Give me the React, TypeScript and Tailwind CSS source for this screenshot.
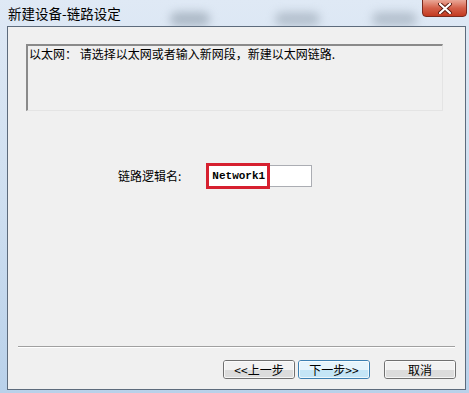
const CJK = { fontFamily: '"Noto Sans CJK SC", "Liberation Sans", sans-serif' }

function WinButton({ label, primary }: { label: string; primary?: boolean }) {
  return (
    <button
      className={
        'relative flex h-[19px] w-[72px] items-center justify-center overflow-hidden rounded-[3px] border text-[12px] leading-none text-black ' +
        (primary ? 'border-[#3c7fb1]' : 'border-[#707070]')
      }
    >
      <div className="absolute inset-0 flex flex-col">
        <div className={'flex-1 ' + (primary ? 'bg-[#e5f4fc]' : 'bg-[#f2f2f2]')} />
        <div className={'flex-1 ' + (primary ? 'bg-[#c4e5f6]' : 'bg-[#dcdcdc]')} />
      </div>
      <div className="absolute inset-0 rounded-[2px] border border-white/70" />
      <span className="relative" style={CJK}>
        {label}
      </span>
    </button>
  )
}

export default function App() {
  return (
    <div className="relative flex h-[393px] w-[469px] flex-col overflow-hidden bg-gradient-to-b from-[#dfe9f5] via-[#cfdff0] to-[#b9d1ea]">
      {/* blurred glass blobs */}
      <div className="absolute left-[170px] top-[12px] h-[14px] w-[40px] rounded-full bg-[#8c9aa8] opacity-60 blur-[5px]" />
      <div className="absolute left-[275px] top-[12px] h-[14px] w-[45px] rounded-full bg-[#8c9aa8] opacity-50 blur-[5px]" />
      <div className="absolute left-[372px] top-[12px] h-[14px] w-[45px] rounded-full bg-[#8c9aa8] opacity-50 blur-[5px]" />

      {/* title bar */}
      <div className="relative flex h-[26px] items-start justify-between">
        <span className="ml-[8px] mt-[4px] text-[13.5px] leading-[18px] text-black" style={CJK}>
          新建设备-链路设定
        </span>
        <div className="mr-[2px] mt-[-1px] flex h-[18px] w-[45px] items-center justify-center rounded-b-[4px] border border-[#7a2a1e] bg-gradient-to-b from-[#e9a797] via-[#d4604a] to-[#c2391f]">
          <svg width="14" height="11" viewBox="0 0 14 11">
            <path d="M2 1 L12 10 M12 1 L2 10" stroke="#5a1a10" strokeWidth="4" strokeLinecap="round" />
            <path d="M2 1 L12 10 M12 1 L2 10" stroke="#ffffff" strokeWidth="2.2" strokeLinecap="round" />
          </svg>
        </div>
      </div>

      {/* client area */}
      <div className="relative ml-[7px] mr-[3px] mb-[3px] flex flex-1 flex-col border border-[#5d6b7c] bg-[#f0f0f0]">
        {/* description box */}
        <div className="ml-[18px] mt-[17px] h-[67px] w-[417px] border-t-2 border-l-2 border-b border-r border-t-[#8a8a8a] border-l-[#8a8a8a] border-b-[#e4e4e4] border-r-[#e4e4e4]">
          <p className="ml-[1px] mt-[1px] text-[12px] leading-[14px] text-black" style={CJK}>
            以太网： 请选择以太网或者输入新网段，新建以太网链路.
          </p>
        </div>

        {/* name row */}
        <div className="ml-[110px] mt-[54px] flex items-center gap-[26px]">
          <span className="text-[12px] leading-none text-black" style={CJK}>
            链路逻辑名:
          </span>
          <div className="relative flex h-[22px] w-[105px] items-center border border-[#abadb3] bg-white">
            <span
              className="ml-[4px] text-[11px] font-bold leading-none text-black"
              style={{ fontFamily: '"Liberation Mono", monospace' }}
            >
              Network1
            </span>
            <div className="absolute left-[-2px] top-[-3px] h-[26px] w-[64px] border-[3px] border-[#d6202f]" />
          </div>
        </div>

        <div className="flex-1" />

        {/* separator */}
        <div className="ml-[10px] mr-[10px] h-[2px] border-t border-b border-t-[#a0a0a0] border-b-white" />

        {/* buttons */}
        <div className="ml-[215px] mb-[10px] mt-[12px] flex">
          <WinButton label="<<上一步" />
          <div className="ml-[3px]">
            <WinButton label="下一步>>" primary />
          </div>
          <div className="ml-[14px]">
            <WinButton label="取消" />
          </div>
        </div>
      </div>
    </div>
  )
}
